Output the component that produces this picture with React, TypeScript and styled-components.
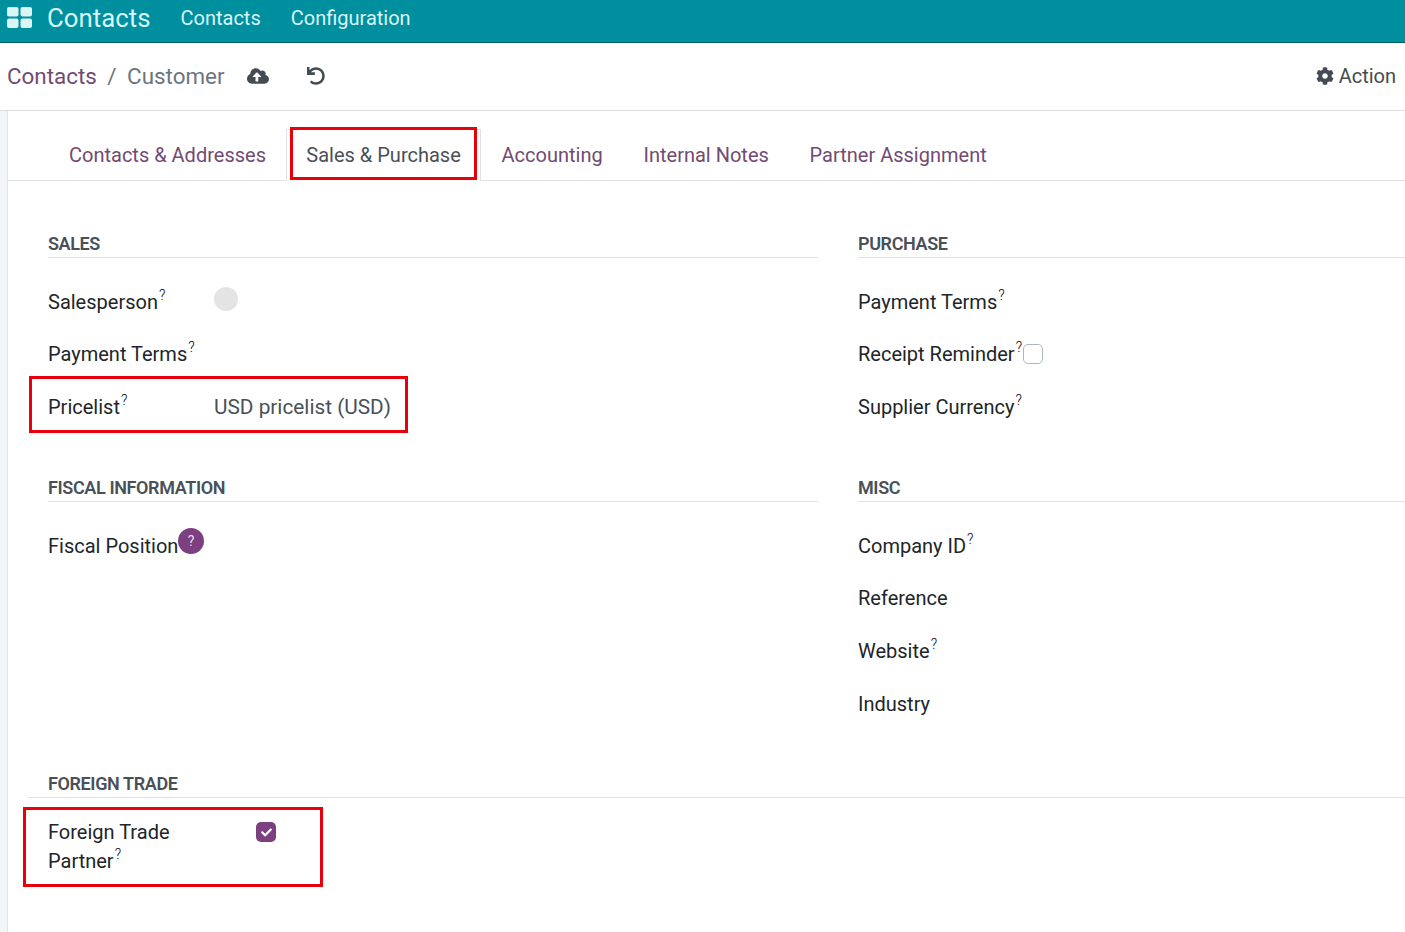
import React from 'react';
import styled, { createGlobalStyle } from 'styled-components';
import { FaCloudUploadAlt, FaUndo, FaCog, FaCheck } from 'react-icons/fa';

const GlobalStyle = createGlobalStyle`
  html, body {
    margin: 0;
    height: 100%;
    overflow: hidden;
    background: #fff;
    font-family: Roboto, "Liberation Sans", sans-serif;
    font-size: 20px;
    color: #212529;
  }
`;

const Page = styled.div`
  width: 1405px;
  height: 932px;
  overflow: hidden;
  display: flex;
  flex-direction: column;
`;

const Navbar = styled.header`
  flex: none;
  height: 36px;
  display: flex;
  align-items: center;
  padding: 0 0 6px 7px;
  background: #008f9f;
  border-bottom: 1px solid #00606b;
  color: #d9f6f5;
`;

const AppsIcon = styled.svg`
  width: 25px;
  height: 22px;
  margin-right: 15px;
  fill: #d9f6f5;
`;

const Brand = styled.span`
  font-size: 25.8px;
  margin-right: 30px;
`;

const NavLink = styled.span`
  margin-right: 30px;
`;

const ControlPanel = styled.div`
  flex: none;
  height: 68px;
  box-sizing: border-box;
  display: flex;
  align-items: center;
  padding: 0 9px 1px 7px;
  border-bottom: 1px solid #dcdcdc;
`;

const Breadcrumb = styled.div`
  font-size: 22.4px;
  color: #6c757d;
  display: flex;
  gap: 10.5px;
`;

const CrumbLink = styled.span`
  color: #714b73;
`;

const PanelIcon = styled.span<{ $gap: number }>`
  display: flex;
  color: #454b52;
  margin-left: ${p => p.$gap}px;
`;

const ActionButton = styled.div`
  margin-left: auto;
  display: flex;
  align-items: center;
  gap: 5px;
  color: #454b52;
  svg {
    font-size: 18px;
  }
`;

const Body = styled.div`
  flex: 1;
  display: flex;
  min-height: 0;
`;

const Strip = styled.div`
  width: 7px;
  flex: none;
  background: #f4f5f8;
  border-right: 1px solid #e4e4e4;
`;

const Sheet = styled.main`
  flex: 1;
  min-width: 0;
`;

const Tabs = styled.nav`
  height: 70px;
  box-sizing: border-box;
  display: flex;
  align-items: flex-end;
  padding-left: 40.6px;
  border-bottom: 1px solid #dee2e6;
`;

const Tab = styled.div<{ $active?: boolean }>`
  position: relative;
  height: 52px;
  box-sizing: border-box;
  margin-bottom: -1px;
  display: flex;
  align-items: center;
  padding: 0 ${p => (p.$active ? '19.4px 0 19px' : '19.4px')};
  border: 1px solid ${p => (p.$active ? '#dee2e6' : 'transparent')};
  border-bottom-color: ${p => (p.$active ? '#fff' : 'transparent')};
  color: ${p => (p.$active ? '#495057' : '#714b73')};
`;

const Frame = styled.div`
  position: absolute;
  box-sizing: border-box;
  border: 3px solid #e8000b;
  pointer-events: none;
`;

const TabFrame = styled(Frame)`
  left: 3px;
  top: -3px;
  width: 187px;
  height: 53px;
`;

const PriceFrame = styled(Frame)`
  left: -19px;
  top: -5px;
  width: 379px;
  height: 57px;
`;

const TradeFrame = styled(Frame)`
  left: -25px;
  top: -11px;
  width: 300px;
  height: 80px;
`;

const Content = styled.div`
  padding: 50px 0 0 40px;
`;

const Columns = styled.div`
  display: grid;
  grid-template-columns: 770px 1fr;
  column-gap: 40px;
  margin-bottom: -1px;
`;

const Section = styled.section`
  margin-bottom: 41.6px;
`;

const Heading = styled.h3`
  margin: 0 0 17.3px;
  height: 27px;
  box-sizing: border-box;
  line-height: 26px;
  font-size: 18px;
  font-weight: 600;
  letter-spacing: -0.38px;
  color: #495057;
  border-bottom: 1px solid #dee2e6;
`;

const WideHeading = styled(Heading)`
  margin: 0 0 20px -20px;
  padding-left: 20px;
`;

const Row = styled.div`
  position: relative;
  height: 52.7px;
  display: flex;
  align-items: center;
`;

const TradeRow = styled.div`
  position: relative;
  display: flex;
  align-items: flex-start;
  line-height: 29.4px;
`;

const Label = styled.span`
  min-width: 166px;
`;

const TradeLabel = styled.span`
  width: 208px;
  padding-right: 40px;
  box-sizing: border-box;
`;

const Hint = styled.sup`
  font-size: 14px;
  font-weight: 300;
  line-height: 0;
  vertical-align: baseline;
  position: relative;
  top: -9px;
  margin-left: 1px;
  color: #000;
`;

const HelpBadge = styled.span`
  position: absolute;
  left: 130px;
  top: 9px;
  width: 26px;
  height: 26px;
  border-radius: 50%;
  background: #7c3f80;
  color: #e9dcea;
  font-size: 14px;
  display: flex;
  align-items: center;
  justify-content: center;
`;

const Avatar = styled.span`
  width: 24px;
  height: 24px;
  margin-top: -5px;
  border-radius: 50%;
  background: #e4e4e4;
`;

const Value = styled.span`
  font-size: 20.8px;
  color: #495057;
`;

const EmptyCheck = styled.span`
  width: 20px;
  height: 20px;
  box-sizing: border-box;
  margin-left: -1px;
  border: 1px solid #adb5bd;
  border-radius: 5px;
`;

const CheckedBox = styled.span`
  width: 20px;
  height: 20px;
  margin-top: 4.5px;
  border-radius: 5px;
  background: #7c3f80;
  color: #fff;
  font-size: 11px;
  display: flex;
  align-items: center;
  justify-content: center;
`;

const Field: React.FC<{ label: string; hint?: boolean; children?: React.ReactNode }> = ({ label, hint = true, children }) => (
  <Row>
    <Label>
      {label}
      {hint && <Hint>?</Hint>}
    </Label>
    {children}
  </Row>
);

const App: React.FC = () => {
  return (
    <Page>
      <GlobalStyle />
      <Navbar>
        <AppsIcon viewBox="0 0 25 22">
          <rect x="0" y="0" width="11.5" height="9.5" rx="2" />
          <rect x="13.5" y="0" width="11.5" height="9.5" rx="2" />
          <rect x="0" y="11.5" width="11.5" height="9.5" rx="2" />
          <rect x="13.5" y="11.5" width="11.5" height="9.5" rx="2" />
        </AppsIcon>
        <Brand>Contacts</Brand>
        <NavLink>Contacts</NavLink>
        <NavLink>Configuration</NavLink>
      </Navbar>

      <ControlPanel>
        <Breadcrumb>
          <CrumbLink>Contacts</CrumbLink>
          <span>/</span>
          <span>Customer</span>
        </Breadcrumb>
        <PanelIcon $gap={22}><FaCloudUploadAlt size={22} /></PanelIcon>
        <PanelIcon $gap={38}><FaUndo size={18} /></PanelIcon>
        <ActionButton>
          <FaCog />
          Action
        </ActionButton>
      </ControlPanel>

      <Body>
        <Strip />
        <Sheet>
          <Tabs>
            <Tab>Contacts &amp; Addresses</Tab>
            <Tab $active>
              Sales &amp; Purchase
              <TabFrame />
            </Tab>
            <Tab>Accounting</Tab>
            <Tab>Internal Notes</Tab>
            <Tab>Partner Assignment</Tab>
          </Tabs>

          <Content>
            <Columns>
              <Section>
                <Heading>SALES</Heading>
                <Field label="Salesperson"><Avatar /></Field>
                <Field label="Payment Terms" />
                <Field label="Pricelist">
                  <Value>USD pricelist (USD)</Value>
                  <PriceFrame />
                </Field>
              </Section>
              <Section>
                <Heading>PURCHASE</Heading>
                <Field label="Payment Terms" />
                <Field label="Receipt Reminder"><EmptyCheck /></Field>
                <Field label="Supplier Currency" />
              </Section>
              <Section>
                <Heading>FISCAL INFORMATION</Heading>
                <Field label="Fiscal Position" hint={false}><HelpBadge>?</HelpBadge></Field>
              </Section>
              <Section>
                <Heading>MISC</Heading>
                <Field label="Company ID" />
                <Field label="Reference" hint={false} />
                <Field label="Website" />
                <Field label="Industry" hint={false} />
              </Section>
            </Columns>

            <WideHeading>FOREIGN TRADE</WideHeading>
            <TradeRow>
              <TradeLabel>Foreign Trade Partner<Hint>?</Hint></TradeLabel>
              <CheckedBox><FaCheck /></CheckedBox>
              <TradeFrame />
            </TradeRow>
          </Content>
        </Sheet>
      </Body>
    </Page>
  );
};

export default App;
